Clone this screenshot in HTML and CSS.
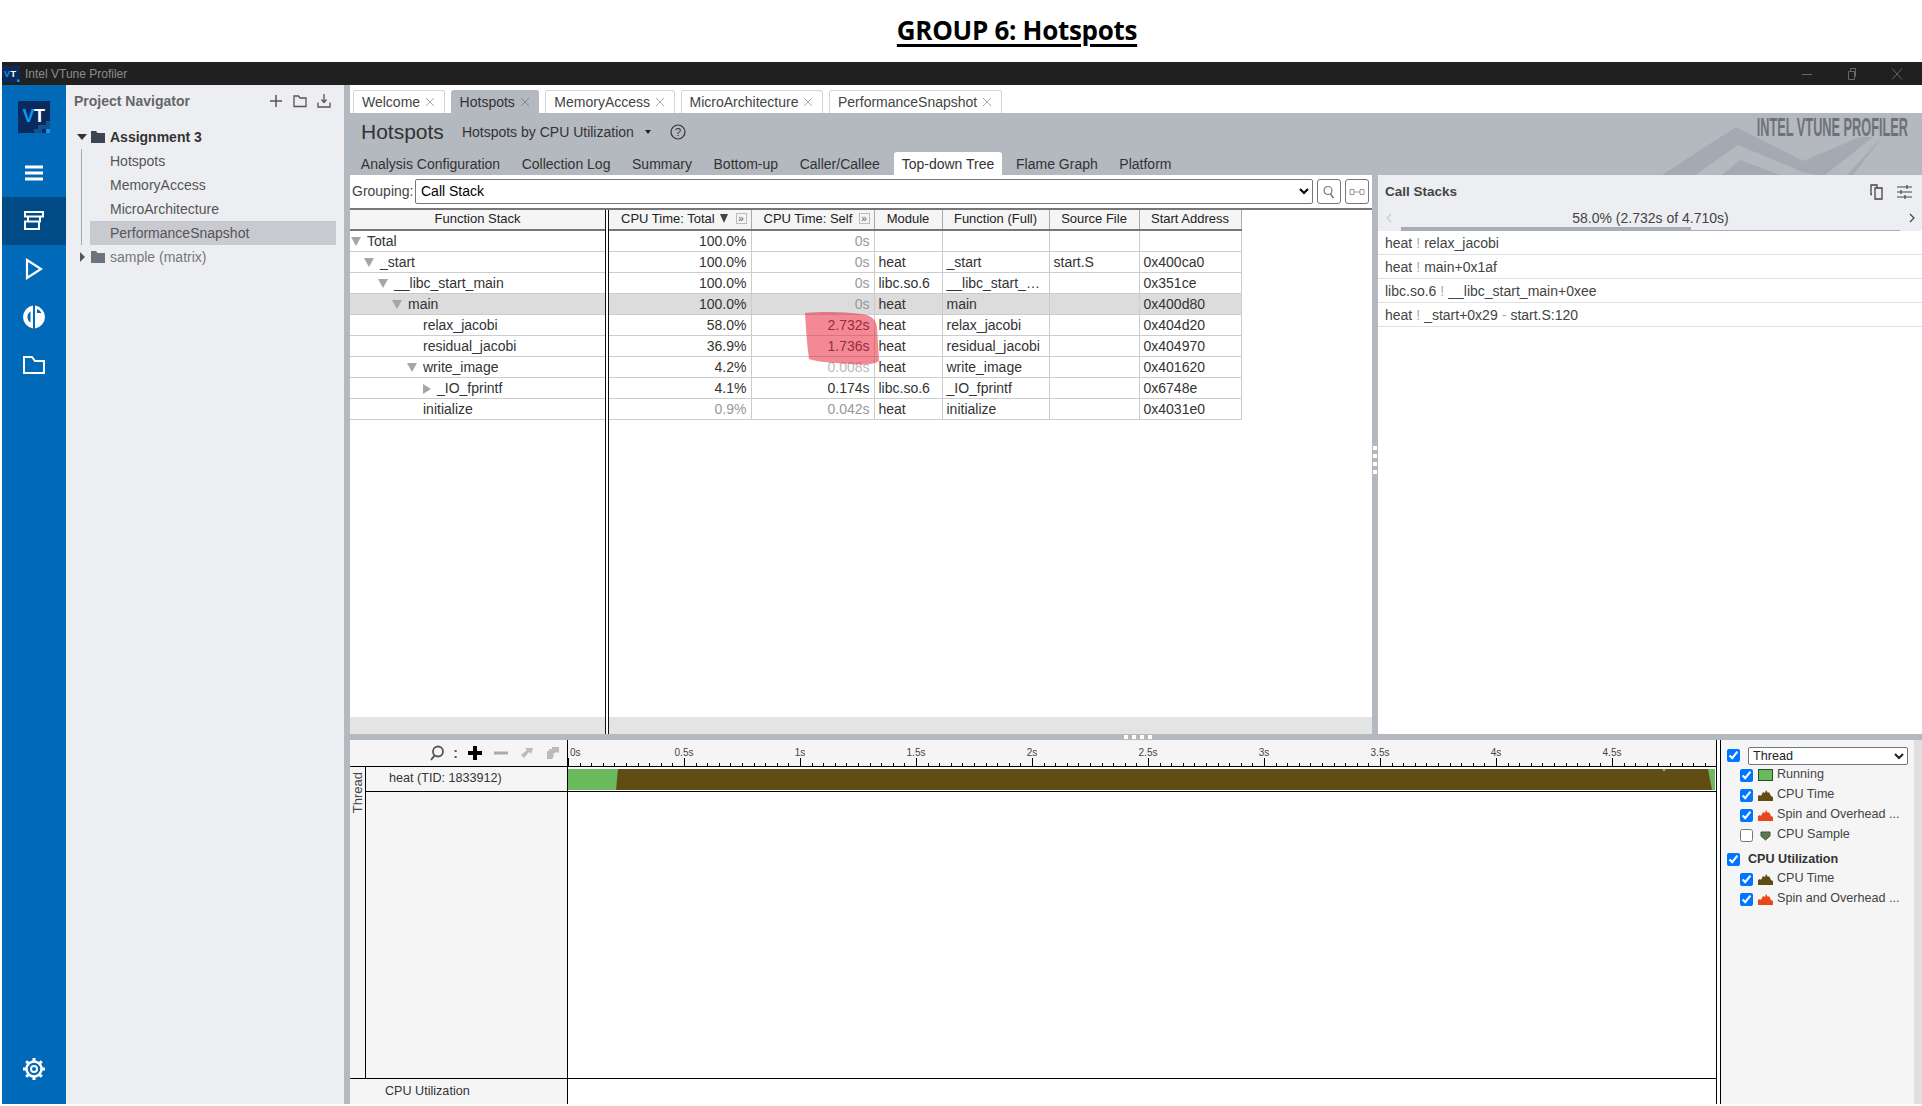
FILE: index.html
```html
<!DOCTYPE html>
<html lang="en">
<head>
    <meta charset="UTF-8">
    <meta name="viewport" content="width=device-width, initial-scale=1.0">
    <title>GROUP 6: Hotspots</title>
    <link rel="stylesheet" href="styles.css">
</head>
<body>
    <h1 class="page-title"><span>GROUP 6: Hotspots</span></h1>

    <div class="app">
        <!-- Window title bar -->
        <div class="titlebar">
            <svg class="titlebar-logo" viewBox="0 0 18 16">
                <rect width="18" height="16" fill="#0a2a5e"/>
                <text x="2" y="11" class="logo-v" font-size="9">V</text>
                <text x="8.500" y="11" class="logo-t" font-size="9">T</text>
                <rect x="15" y="13.500" width="2.500" height="2.500" fill="#0a9bf0"/>
            </svg>
            <span class="titlebar-text">Intel VTune Profiler</span>
            <div class="window-controls">
                <svg width="12" height="12" viewBox="0 0 12 12"><path d="M1 6.500h10" stroke="#666" fill="none"/></svg>
                <svg width="12" height="14" viewBox="0 0 12 14"><path d="M2.500 4.500h6v8h-6zM4.500 4.500v-3h5v8h-1" stroke="#666" fill="none"/></svg>
                <svg width="12" height="14" viewBox="0 0 12 14"><path d="M1 1.500l10 11M11 1.500l-10 11" stroke="#666" fill="none"/></svg>
            </div>
        </div>

        <div class="app-body">
            <!-- Left icon rail -->
            <div class="rail">
                <svg class="rail-logo" viewBox="0 0 32 32">
                    <rect width="32" height="32" fill="#0a2a5e"/>
                    <text x="4.500" y="21" class="logo-v" font-size="18">V</text>
                    <text x="16" y="21" class="logo-t" font-size="18">T</text>
                    <rect x="16" y="28" width="4" height="4" fill="#14528f"/>
                    <rect x="20" y="24" width="4" height="8" fill="#14528f"/>
                    <rect x="24" y="24" width="4" height="4" fill="#14528f"/>
                    <rect x="28" y="20" width="4" height="8" fill="#14528f"/>
                    <rect x="28" y="28" width="4" height="4" fill="#0a9bf0"/>
                </svg>
                <div class="rail-item">
                    <svg width="18" height="16" viewBox="0 0 18 16"><path d="M0 2h18M0 8h18M0 14h18" stroke="#fff" stroke-width="3" fill="none"/></svg>
                </div>
                <div class="rail-item active">
                    <svg width="20" height="20" viewBox="0 0 20 20"><path d="M1 1h18v4.500H1zM4 5.500v5h12v-5M1 10.500h14V18H1z" stroke="#fff" stroke-width="2" fill="none"/></svg>
                </div>
                <div class="rail-item">
                    <svg width="18" height="22" viewBox="0 0 18 22"><path d="M2 2l14 9-14 9z" stroke="#fff" stroke-width="2.200" fill="none"/></svg>
                </div>
                <div class="rail-item">
                    <svg width="24" height="24" viewBox="0 0 24 24"><path d="M11 .6v22.800A11.500 11.500 0 0 1 11 .6zM8.500 6.500A6.500 6.500 0 0 0 8.500 17.500z" fill="#fff" fill-rule="evenodd"/><path d="M13 .6A11.500 11.500 0 0 1 13 23.400zM15 4v4h4.500A8 8 0 0 0 15 4z" fill="#fff" fill-rule="evenodd"/></svg>
                </div>
                <div class="rail-item">
                    <svg width="22" height="18" viewBox="0 0 22 18"><path d="M1 1h8l3 4h9v12H1z" stroke="#fff" stroke-width="2" fill="none"/></svg>
                </div>
                <div class="rail-spacer"></div>
                <svg class="rail-gear" width="24" height="24" viewBox="0 0 24 24">
                    <circle cx="12" cy="12" r="7.500" stroke="#fff" stroke-width="2.500" fill="none"/>
                    <circle cx="12" cy="12" r="3" stroke="#fff" stroke-width="2" fill="none"/>
                    <path d="M12 1v3M12 20v3M1 12h3M20 12h3M4.200 4.200l2.100 2.100M17.700 17.700l2.100 2.100M4.200 19.800l2.100-2.100M17.700 6.300l2.100-2.100" stroke="#fff" stroke-width="3" fill="none"/>
                </svg>
            </div>

            <!-- Project navigator -->
            <div class="navigator">
                <div class="nav-header">
                    <span class="nav-title">Project Navigator</span>
                    <div class="nav-tools">
                        <svg width="14" height="14" viewBox="0 0 14 14"><path d="M7 1v12M1 7h12" stroke="#555" stroke-width="1.500" fill="none"/></svg>
                        <svg width="14" height="14" viewBox="0 0 14 14"><path d="M1 2h4.500l1.500 2h6v8.500H1z" stroke="#555" stroke-width="1.300" fill="none"/></svg>
                        <svg width="14" height="14" viewBox="0 0 14 14"><path d="M7 0v8M4.500 5.500L7 8.500l2.500-3M1 8.500v4.500h12V8.500" stroke="#555" stroke-width="1.300" fill="none"/></svg>
                    </div>
                </div>
                <div class="tree-root open">
                    <span class="caret-down"></span>
                    <svg class="tree-folder" viewBox="0 0 14 12"><path d="M0 0h5l1.500 2H14v10H0z" fill="#3c4652"/></svg>
                    <span>Assignment 3</span>
                </div>
                <div class="tree-children">
                    <div class="tree-item">Hotspots</div>
                    <div class="tree-item">MemoryAccess</div>
                    <div class="tree-item">MicroArchitecture</div>
                    <div class="tree-item selected">PerformanceSnapshot</div>
                </div>
                <div class="tree-root">
                    <span class="caret-right"></span>
                    <svg class="tree-folder" viewBox="0 0 14 12"><path d="M0 0h5l1.500 2H14v10H0z" fill="#6d747d"/></svg>
                    <span>sample (matrix)</span>
                </div>
            </div>
            <div class="splitter-v"></div>

            <!-- Main area -->
            <div class="main">
                <div class="tabs">
                    <div class="tab">Welcome<svg class="tab-close" viewBox="0 0 10 10"><path d="M1 1l8 8M9 1l-8 8"/></svg></div>
                    <div class="tab active">Hotspots<svg class="tab-close" viewBox="0 0 10 10"><path d="M1 1l8 8M9 1l-8 8"/></svg></div>
                    <div class="tab">MemoryAccess<svg class="tab-close" viewBox="0 0 10 10"><path d="M1 1l8 8M9 1l-8 8"/></svg></div>
                    <div class="tab">MicroArchitecture<svg class="tab-close" viewBox="0 0 10 10"><path d="M1 1l8 8M9 1l-8 8"/></svg></div>
                    <div class="tab">PerformanceSnapshot<svg class="tab-close" viewBox="0 0 10 10"><path d="M1 1l8 8M9 1l-8 8"/></svg></div>
                </div>

                <div class="result-header">
                    <svg class="brand-art" width="282" height="65" viewBox="0 0 282 65">
                        <polygon points="22,65 96,17 163,51 220,27 233,27 185,65 178,65 165,63 98,35 55,65" fill="#a5a9b1"/>
                        <polygon points="82,65 100,50 140,65" fill="#a5a9b1"/>
                        <polygon points="207,65 242,27 213,65" fill="#a5a9b1"/>
                    </svg>
                    <div class="brand-text">INTEL VTUNE PROFILER</div>
                    <div class="result-title">
                        <span class="result-name">Hotspots</span>
                        <span class="result-type">Hotspots by CPU Utilization</span>
                        <span class="result-caret"></span>
                        <svg class="help-icon" width="16" height="16" viewBox="0 0 16 16">
                            <circle cx="8" cy="8" r="7" stroke="#333" stroke-width="1.200" fill="none"/>
                            <text x="8" y="12" text-anchor="middle" class="help-mark">?</text>
                        </svg>
                    </div>
                    <div class="subtabs">
                        <div class="subtab">Analysis Configuration</div>
                        <div class="subtab">Collection Log</div>
                        <div class="subtab">Summary</div>
                        <div class="subtab">Bottom-up</div>
                        <div class="subtab">Caller/Callee</div>
                        <div class="subtab active">Top-down Tree</div>
                        <div class="subtab">Flame Graph</div>
                        <div class="subtab">Platform</div>
                    </div>
                </div>

                <div class="content">
                    <div class="top-split">
                        <!-- Grid pane -->
                        <div class="grid-pane">
                            <div class="grouping">
                                <label class="grouping-label">Grouping:</label>
                                <select class="grouping-select"><option>Call Stack</option></select>
                                <div class="tool-btn">
                                    <svg width="14" height="14" viewBox="0 0 14 14"><circle cx="6" cy="5.500" r="4" stroke="#777" fill="none" stroke-width="1.200"/><path d="M8.500 9l3 4" stroke="#777" stroke-width="1.500"/></svg>
                                </div>
                                <div class="tool-btn">
                                    <svg width="16" height="10" viewBox="0 0 16 10"><path d="M1 2.500h4v5H1zM11 2.500h4v5h-4zM5 5h6" stroke="#999" fill="none"/></svg>
                                </div>
                            </div>
                            <div class="grid-body">
                                <div class="grid-tree">
                                    <table class="grid">
                                        <thead><tr><th>Function Stack</th></tr></thead>
                                        <tbody>
                                            <tr><td class="lvl-0"><span class="tw tw-open"></span>Total</td></tr>
                                            <tr><td class="lvl-1"><span class="tw tw-open"></span>_start</td></tr>
                                            <tr><td class="lvl-2"><span class="tw tw-open"></span>__libc_start_main</td></tr>
                                            <tr class="row-selected"><td class="lvl-3"><span class="tw tw-open"></span>main</td></tr>
                                            <tr><td class="lvl-4"><span class="tw"></span>relax_jacobi</td></tr>
                                            <tr><td class="lvl-4"><span class="tw"></span>residual_jacobi</td></tr>
                                            <tr><td class="lvl-4"><span class="tw tw-open"></span>write_image</td></tr>
                                            <tr><td class="lvl-5"><span class="tw tw-closed"></span>_IO_fprintf</td></tr>
                                            <tr><td class="lvl-4"><span class="tw"></span>initialize</td></tr>
                                        </tbody>
                                    </table>
                                    <div class="grid-hscroll"></div>
                                </div>
                                <div class="grid-divider"></div>
                                <div class="grid-data">
                                    <table class="grid">
                                        <colgroup>
                                            <col class="col-total"><col class="col-self"><col class="col-module">
                                            <col class="col-func"><col class="col-source"><col class="col-addr">
                                        </colgroup>
                                        <thead>
                                            <tr>
                                                <th><div class="th-metric">CPU Time: Total<span class="sort-mark"></span><span class="expand-box">»</span></div></th>
                                                <th><div class="th-metric">CPU Time: Self<span class="expand-box">»</span></div></th>
                                                <th>Module</th>
                                                <th>Function (Full)</th>
                                                <th>Source File</th>
                                                <th>Start Address</th>
                                            </tr>
                                        </thead>
                                        <tbody>
                                            <tr><td class="num">100.0%</td><td class="num faint">0s</td><td></td><td></td><td></td><td></td></tr>
                                            <tr><td class="num">100.0%</td><td class="num faint">0s</td><td>heat</td><td>_start</td><td>start.S</td><td>0x400ca0</td></tr>
                                            <tr><td class="num">100.0%</td><td class="num faint">0s</td><td>libc.so.6</td><td class="clip">__libc_start_main</td><td></td><td>0x351ce</td></tr>
                                            <tr class="row-selected"><td class="num">100.0%</td><td class="num faint">0s</td><td>heat</td><td>main</td><td></td><td>0x400d80</td></tr>
                                            <tr><td class="num">58.0%</td><td class="num">2.732s</td><td>heat</td><td>relax_jacobi</td><td></td><td>0x404d20</td></tr>
                                            <tr><td class="num">36.9%</td><td class="num">1.736s</td><td>heat</td><td>residual_jacobi</td><td></td><td>0x404970</td></tr>
                                            <tr><td class="num">4.2%</td><td class="num fainter">0.008s</td><td>heat</td><td>write_image</td><td></td><td>0x401620</td></tr>
                                            <tr><td class="num">4.1%</td><td class="num">0.174s</td><td>libc.so.6</td><td>_IO_fprintf</td><td></td><td>0x6748e</td></tr>
                                            <tr><td class="num faint">0.9%</td><td class="num faint">0.042s</td><td>heat</td><td>initialize</td><td></td><td>0x4031e0</td></tr>
                                        </tbody>
                                    </table>
                                    <div class="grid-hscroll"></div>
                                    <!-- hand-drawn red marker over the self time cells -->
                                    <svg class="marker" width="82" height="56" viewBox="0 0 80 56">
                                        <path d="M2 2C20 0 45 1 58 3C68 4 73 8 74 16L76 50C70 54 60 54 48 53C30 52 15 51 6 48C4 34 3 18 2 2z"/>
                                    </svg>
                                </div>
                            </div>
                        </div>
                        <div class="splitter-dots-v"><i></i><i></i><i></i><i></i></div>

                        <!-- Call stacks pane -->
                        <div class="stacks">
                            <div class="stacks-head">
                                <span class="stacks-title">Call Stacks</span>
                                <div class="stacks-tools">
                                    <svg width="14" height="16" viewBox="0 0 14 16"><path d="M2 10.500H1V1h6v2.500M5 4h7v11H5z" stroke="#444" stroke-width="1.300" fill="none"/></svg>
                                    <svg width="16" height="16" viewBox="0 0 16 16"><path d="M1 3h15M1 8h15M1 13h15M11 1v4M5 6v4M9 11v4" stroke="#444" stroke-width="1.200" fill="none"/></svg>
                                </div>
                            </div>
                            <div class="stacks-nav">
                                <svg width="8" height="12" viewBox="0 0 8 12"><path d="M6 2L2 6l4 4" stroke="#ccc" stroke-width="1.200" fill="none"/></svg>
                                <span class="stacks-count">58.0% (2.732s of 4.710s)</span>
                                <svg width="8" height="12" viewBox="0 0 8 12"><path d="M2 2l4 4-4 4" stroke="#444" stroke-width="1.200" fill="none"/></svg>
                            </div>
                            <div class="stacks-progress"><div class="stacks-progress-fill"></div></div>
                            <div class="stack-row">heat <em>!</em> relax_jacobi</div>
                            <div class="stack-row">heat <em>!</em> main+0x1af</div>
                            <div class="stack-row">libc.so.6 <em>!</em> __libc_start_main+0xee</div>
                            <div class="stack-row">heat <em>!</em> _start+0x29 <em>-</em> start.S:120</div>
                        </div>
                    </div>

                    <div class="splitter-dots-h"><i></i><i></i><i></i><i></i></div>

                    <!-- Timeline -->
                    <div class="timeline">
                        <div class="tl-left">
                            <div class="tl-tools">
                                <svg width="16" height="16" viewBox="0 0 16 16"><circle cx="9" cy="6.500" r="5" stroke="#555" stroke-width="1.800" fill="none"/><path d="M5.500 10.500L2 15" stroke="#555" stroke-width="2"/></svg>
                                <span class="tl-colon">:</span>
                                <svg width="14" height="14" viewBox="0 0 14 14"><path d="M7 0v14M0 7h14" stroke="#000" stroke-width="4"/></svg>
                                <svg width="14" height="14" viewBox="0 0 14 14"><path d="M0 7h14" stroke="#aaa" stroke-width="3"/></svg>
                                <svg width="14" height="14" viewBox="0 0 14 14"><path d="M13 2H5l2 2-6 5 3 3 5-6 2 2z" fill="#bbb"/></svg>
                                <svg width="14" height="14" viewBox="0 0 14 14"><path d="M13 1H6v2H3v2H1v8h5l2-3-1-2 4-2 2 1z" fill="#bbb"/></svg>
                            </div>
                            <div class="tl-threads">
                                <div class="tl-group-label"><span>Thread</span></div>
                                <div class="tl-thread-list">
                                    <div class="tl-thread">heat (TID: 1833912)</div>
                                </div>
                            </div>
                            <div class="tl-bottom-label">CPU Utilization</div>
                        </div>
                        <div class="tl-chart">
                            <div class="ruler">
                                <div class="ruler-cell first"><span>0s</span></div>
                                <div class="ruler-cell"><span>0.5s</span></div>
                                <div class="ruler-cell"><span>1s</span></div>
                                <div class="ruler-cell"><span>1.5s</span></div>
                                <div class="ruler-cell"><span>2s</span></div>
                                <div class="ruler-cell"><span>2.5s</span></div>
                                <div class="ruler-cell"><span>3s</span></div>
                                <div class="ruler-cell"><span>3.5s</span></div>
                                <div class="ruler-cell"><span>4s</span></div>
                                <div class="ruler-cell"><span>4.5s</span></div>
                                <div class="ruler-cell"></div>
                            </div>
                            <div class="tl-track">
                                <svg class="tl-bar" width="1147" height="21" viewBox="0 0 1147 21">
                                    <rect width="1147" height="21" fill="#5f4d14"/>
                                    <polygon points="0,0 50,0 48,21 0,21" fill="#6aba5d"/>
                                    <polygon points="1094,0 1098,0 1096,3" fill="#6aba5d"/>
                                    <polygon points="1140,0 1147,0 1147,21 1144,21" fill="#6aba5d"/>
                                </svg>
                            </div>
                            <div class="tl-chart-space"></div>
                            <div class="tl-chart-bottom"></div>
                        </div>
                        <div class="tl-gap"></div>
                        <div class="legend">
                            <div class="legend-group first">
                                <input type="checkbox" checked>
                                <select class="legend-select"><option>Thread</option></select>
                            </div>
                            <div class="legend-row">
                                <input type="checkbox" checked>
                                <span class="swatch-running"></span>
                                <span class="legend-text">Running</span>
                            </div>
                            <div class="legend-row">
                                <input type="checkbox" checked>
                                <svg class="legend-icon" viewBox="0 0 15 11"><path class="mtn-brown" d="M0 11V6l2-1 1 1 2-4 2 1 1-3 2 3 1-1 2 4 2 1v4z"/></svg>
                                <span class="legend-text">CPU Time</span>
                            </div>
                            <div class="legend-row">
                                <input type="checkbox" checked>
                                <svg class="legend-icon" viewBox="0 0 15 11"><path class="mtn-orange" d="M0 11V6l2-1 1 1 2-4 2 1 1-3 2 3 1-1 2 4 2 1v4z"/></svg>
                                <span class="legend-text">Spin and Overhead ...</span>
                            </div>
                            <div class="legend-row">
                                <input type="checkbox">
                                <svg class="legend-icon" viewBox="0 0 15 11"><path d="M3 2h9v4l-4.500 4-4.500-4z" fill="#5c7a50" stroke="#3e5236"/></svg>
                                <span class="legend-text">CPU Sample</span>
                            </div>
                            <div class="legend-group second">
                                <input type="checkbox" checked>
                                <span class="legend-group-name">CPU Utilization</span>
                            </div>
                            <div class="legend-row">
                                <input type="checkbox" checked>
                                <svg class="legend-icon" viewBox="0 0 15 11"><path class="mtn-brown" d="M0 11V6l2-1 1 1 2-4 2 1 1-3 2 3 1-1 2 4 2 1v4z"/></svg>
                                <span class="legend-text">CPU Time</span>
                            </div>
                            <div class="legend-row">
                                <input type="checkbox" checked>
                                <svg class="legend-icon" viewBox="0 0 15 11"><path class="mtn-orange" d="M0 11V6l2-1 1 1 2-4 2 1 1-3 2 3 1-1 2 4 2 1v4z"/></svg>
                                <span class="legend-text">Spin and Overhead ...</span>
                            </div>
                        </div>
                        <div class="legend-scroll"></div>
                    </div>
                </div>
            </div>
        </div>
    </div>
</body>
</html>
```

FILE: styles.css
```css
* {
    box-sizing: border-box;
}
html, body {
    margin: 0;
    height: 100%;
    overflow: hidden;
}
body {
    font-family: "Liberation Sans", Arial, sans-serif;
    font-size: 14px;
    color: #333;
    background-color: #fff;
}

/* Page heading above the screenshot */
.page-title {
    height: 62px;
    margin: 0;
    padding: 12px 0 0 112px;
    font-family: "Open Sans", sans-serif;
    font-size: 26px;
    line-height: 36px;
    font-weight: 700;
    color: #000;
    text-align: center;
    letter-spacing: -0.3px;
}
.page-title span {
    text-decoration: underline;
    text-decoration-thickness: 3px;
    text-underline-offset: 4px;
}

.app {
    display: flex;
    flex-direction: column;
    height: 1042px;
    margin-left: 2px;
}

/* Title bar */
.titlebar {
    display: flex;
    align-items: center;
    flex: 0 0 23px;
    background-color: #202020;
}
.titlebar-logo {
    width: 18px;
    height: 16px;
}
.titlebar-text {
    margin-left: 5px;
    font-size: 12px;
    color: #8c8c8c;
}
.window-controls {
    display: flex;
    align-items: center;
    gap: 33px;
    margin-left: auto;
    padding-right: 19px;
}
.logo-v, .logo-t {
    font-family: "Liberation Sans", sans-serif;
    font-weight: 700;
}
.logo-v {
    fill: #0a9bf0;
}
.logo-t {
    fill: #fff;
}

.app-body {
    display: flex;
    flex: 1;
    min-height: 0;
}

/* Icon rail */
.rail {
    display: flex;
    flex-direction: column;
    align-items: center;
    flex: 0 0 64px;
    background-color: #0069b8;
    padding-top: 16px;
}
.rail-logo {
    width: 32px;
    height: 32px;
    margin-bottom: 16px;
    flex: none;
}
.rail-item {
    display: flex;
    align-items: center;
    justify-content: center;
    width: 100%;
    height: 48px;
    flex: none;
}
.rail-item.active {
    background-color: #004a86;
}
.rail-spacer {
    flex: 1;
}
.rail-gear {
    margin-bottom: 23px;
}

/* Project navigator */
.navigator {
    flex: 0 0 278px;
    background-color: #edeef1;
}
.nav-header {
    display: flex;
    align-items: center;
    justify-content: space-between;
    height: 32px;
    padding: 0 13px 0 8px;
    margin-bottom: 8px;
}
.nav-title {
    font-weight: 700;
    color: #666;
}
.nav-tools {
    display: flex;
    gap: 10px;
}
.tree-root {
    display: flex;
    align-items: center;
    height: 24px;
    padding-left: 11px;
    color: #777;
}
.tree-root.open {
    font-weight: 700;
    color: #333;
}
.tree-folder {
    width: 14px;
    height: 12px;
    margin: 0 5px 0 4px;
}
.caret-down, .caret-right {
    display: inline-block;
    width: 10px;
    height: 6px;
}
.caret-down {
    border-left: 5px solid transparent;
    border-right: 5px solid transparent;
    border-top: 6px solid #333;
}
.caret-right {
    width: 5px;
    height: 10px;
    margin: 0 2px 0 3px;
    border-top: 5px solid transparent;
    border-bottom: 5px solid transparent;
    border-left: 5px solid #555;
}
.tree-children {
    margin-left: 15px;
    border-left: 1px solid #aaa;
}
.tree-item {
    display: flex;
    align-items: center;
    height: 24px;
    margin: 0 8px 0 8px;
    padding-left: 20px;
    color: #555;
}
.tree-item.selected {
    background-color: #c8cad0;
}

.splitter-v {
    flex: 0 0 6px;
    background-color: #b4b8bf;
}

/* Main area */
.main {
    display: flex;
    flex-direction: column;
    flex: 1;
    min-width: 0;
}
.tabs {
    display: flex;
    flex: 0 0 28px;
    gap: 6px;
    padding: 5px 0 0 3px;
    background-color: #fff;
}
.tab {
    display: flex;
    align-items: center;
    padding: 0 8.5px 0 8px;
    border: 1px solid #d2d5d9;
    border-bottom: none;
    border-radius: 3px 3px 0 0;
    color: #444;
}
.tab.active {
    background-color: #b4b8bf;
    border-color: #b4b8bf;
    color: #333;
}
.tab-close {
    width: 10px;
    height: 10px;
    margin-left: 5px;
    stroke: #aaa;
    fill: none;
}
.tab.active .tab-close {
    stroke: #888;
}

.result-header {
    position: relative;
    flex: 0 0 62px;
    background-color: #b4b8bf;
    overflow: hidden;
}
.brand-art {
    position: absolute;
    right: 0;
    top: -3px;
}
.brand-text {
    position: absolute;
    top: -1px;
    right: 14px;
    width: 400px;
    font-size: 26px;
    line-height: 30px;
    font-weight: 700;
    color: #6e7278;
    white-space: nowrap;
    text-align: right;
    transform: scaleX(0.49);
    transform-origin: right center;
}
.result-title {
    position: relative;
    display: flex;
    align-items: center;
    height: 37px;
    padding-left: 11px;
}
.result-name {
    font-size: 21px;
    color: #333;
}
.result-type {
    margin-left: 18px;
}
.result-caret {
    width: 0;
    height: 0;
    margin-left: 11px;
    border-left: 3.5px solid transparent;
    border-right: 3.5px solid transparent;
    border-top: 4px solid #222;
}
.help-icon {
    margin-left: 19px;
}
.help-mark {
    font-size: 11px;
    fill: #333;
}
.subtabs {
    position: relative;
    display: flex;
    height: 25px;
}
.subtab {
    display: flex;
    align-items: center;
    padding: 2px 10.8px 0;
    color: #333;
}
.subtab.active {
    margin: 2px 3px 0;
    padding: 0 8px;
    background-color: #fff;
    border-radius: 3px 3px 0 0;
}

.content {
    display: flex;
    flex-direction: column;
    flex: 1;
    min-height: 0;
}
.top-split {
    display: flex;
    flex: 0 0 559px;
    min-height: 0;
}

/* Grid */
.grid-pane {
    display: flex;
    flex-direction: column;
    flex: 0 0 1022px;
    background-color: #fff;
}
.grouping {
    display: flex;
    align-items: center;
    flex: 0 0 33px;
    padding: 0 2px;
    color: #444;
}
.grouping-label {
    width: 63px;
    margin-bottom: 1px;
}
.grouping-select {
    width: 898px;
    height: 25px;
    padding: 0 0 1px 1px;
    border: 1px solid #777;
    border-radius: 2px;
    background-color: #fff;
    font-family: inherit;
    font-size: 14px;
    color: #000;
}
.tool-btn {
    display: flex;
    align-items: center;
    justify-content: center;
    width: 24px;
    height: 25px;
    margin-left: 4px;
    border: 1px solid #777;
    border-radius: 3px;
}
.grid-body {
    display: flex;
    flex: 1;
    min-height: 0;
    border-top: 2px solid #777;
}
.grid-tree {
    display: flex;
    flex-direction: column;
    flex: 0 0 255px;
}
.grid-divider {
    flex: 0 0 4px;
    border-left: 1px solid #111;
    border-right: 1px solid #111;
}
.grid-data {
    position: relative;
    display: flex;
    flex-direction: column;
    flex: 1;
}
.grid {
    flex: none;
    width: 100%;
    border-collapse: collapse;
    table-layout: fixed;
}
.grid-data .grid {
    width: 632px;
}
.col-total { width: 142px; }
.col-self { width: 123px; }
.col-module { width: 68px; }
.col-func { width: 107px; }
.col-source { width: 90px; }
.col-addr { width: 102px; }
.grid th {
    height: 20px;
    padding: 0 4px 2px;
    background-color: #f5f5f5;
    border-right: 1px solid #aaa;
    border-bottom: 2px solid #777;
    font-size: 13px;
    font-weight: 400;
    color: #222;
}
.grid-tree .grid th {
    border-right: none;
}
.grid td {
    height: 21px;
    padding: 0 4px;
    border-right: 1px solid #ccc;
    border-bottom: 1px solid #ccc;
    color: #333;
    white-space: nowrap;
    overflow: hidden;
}
.grid-tree .grid td {
    border-right: none;
    padding-right: 0;
}
.row-selected td {
    background-color: #dcdcdc;
}
.grid td.num {
    text-align: right;
}
.grid td.faint {
    color: #999;
}
.grid td.fainter {
    color: #bbb;
}
.grid td.clip {
    text-overflow: ellipsis;
}
.lvl-0 { padding-left: 1px !important; }
.lvl-1 { padding-left: 14px !important; }
.lvl-2 { padding-left: 28px !important; }
.lvl-3 { padding-left: 42px !important; }
.lvl-4 { padding-left: 57px !important; }
.lvl-5 { padding-left: 71px !important; }
.tw {
    display: inline-block;
    width: 16px;
    height: 10px;
    vertical-align: -1px;
}
.tw-open::before {
    content: "";
    display: block;
    width: 0;
    height: 0;
    border-left: 5px solid transparent;
    border-right: 5px solid transparent;
    border-top: 9px solid #a6a6a6;
}
.tw-closed::before {
    content: "";
    display: block;
    width: 0;
    height: 0;
    margin-left: 2px;
    border-top: 5px solid transparent;
    border-bottom: 5px solid transparent;
    border-left: 8px solid #a6a6a6;
}
.th-metric {
    display: flex;
    align-items: center;
    padding-left: 8px;
}
.th-metric .expand-box {
    margin-left: auto;
}
.sort-mark {
    width: 0;
    height: 0;
    margin-left: 5px;
    border-left: 4px solid transparent;
    border-right: 4px solid transparent;
    border-top: 9px solid #444;
}
.expand-box {
    display: inline-flex;
    align-items: center;
    justify-content: center;
    width: 11px;
    height: 11px;
    border: 1px solid #bbb;
    font-size: 10px;
    line-height: 9px;
    color: #555;
}
.marker {
    position: absolute;
    left: 193px;
    top: 101px;
    pointer-events: none;
}
.marker path {
    fill: #e8283c;
    fill-opacity: 0.55;
}
.grid-hscroll {
    flex: 0 0 17px;
    margin-top: auto;
    background-color: #e4e4e4;
}

.splitter-dots-v {
    display: flex;
    flex-direction: column;
    align-items: center;
    justify-content: center;
    gap: 4px;
    flex: 0 0 6px;
    padding-top: 10px;
    background-color: #b4b8bf;
}
.splitter-dots-v i, .splitter-dots-h i {
    display: block;
    width: 4px;
    height: 4px;
    background-color: #fff;
}
.splitter-dots-h {
    display: flex;
    align-items: center;
    justify-content: center;
    gap: 4px;
    flex: 0 0 6px;
    padding-left: 4px;
    background-color: #b4b8bf;
}

/* Call stacks */
.stacks {
    flex: 1;
    min-width: 0;
    background-color: #fff;
    color: #444;
}
.stacks-head {
    display: flex;
    align-items: center;
    justify-content: space-between;
    height: 33px;
    padding: 0 10px 0 7px;
    background-color: #edeef1;
}
.stacks-title {
    font-size: 13.5px;
    font-weight: 700;
    color: #444;
}
.stacks-tools {
    display: flex;
    gap: 12px;
}
.stacks-nav {
    display: flex;
    align-items: center;
    justify-content: space-between;
    height: 19px;
    padding: 1px 6px 0 7px;
    background-color: #edeef1;
}
.stacks-progress {
    height: 4px;
    padding: 0 22px 0 23px;
    background-color: #edeef1;
    background-image: linear-gradient(#a9adb4, #a9adb4);
    background-size: calc(100% - 45px) 1px;
    background-position: 23px bottom;
    background-repeat: no-repeat;
}
.stacks-progress-fill {
    width: 290px;
    height: 4px;
    background-color: #a9adb4;
}
.stack-row {
    display: flex;
    align-items: center;
    gap: 4px;
    height: 24px;
    padding-left: 7px;
    border-bottom: 1px solid #dfe1e5;
}
.stack-row em {
    font-style: normal;
    color: #aaa;
}

/* Timeline */
.timeline {
    display: flex;
    flex: 1;
    min-height: 0;
}
.tl-left {
    display: flex;
    flex-direction: column;
    flex: 0 0 218px;
    background-color: #f5f5f5;
    border-right: 1px solid #000;
}
.tl-tools {
    display: flex;
    align-items: center;
    justify-content: flex-end;
    gap: 12px;
    flex: 0 0 27px;
    padding-right: 7px;
    border-bottom: 1px solid #000;
}
.tl-colon {
    font-size: 14px;
    font-weight: 700;
    color: #555;
    margin-left: -4px;
    margin-right: -2px;
}
.tl-threads {
    display: flex;
    flex: 1;
    min-height: 0;
    border-bottom: 1px solid #000;
}
.tl-group-label {
    flex: 0 0 16px;
    padding-top: 5px;
    border-right: 1px solid #000;
    font-size: 13px;
    line-height: 15px;
}
.tl-group-label span {
    display: block;
    writing-mode: vertical-rl;
    transform: rotate(180deg);
    color: #444;
}
.tl-thread-list {
    flex: 1;
}
.tl-thread {
    display: flex;
    align-items: center;
    height: 25px;
    padding: 0 0 2px 23px;
    border-bottom: 1px solid #000;
    font-size: 12.6px;
}
.tl-bottom-label {
    display: flex;
    align-items: center;
    flex: 0 0 25px;
    padding: 0 0 2px 35px;
    font-size: 12.6px;
}
.tl-chart {
    display: flex;
    flex-direction: column;
    flex: 0 0 1148px;
    min-width: 0;
    background-color: #fff;
}
.ruler {
    position: relative;
    display: flex;
    flex: 0 0 27px;
    overflow: hidden;
    background-color: #f5f5f5;
    border-bottom: 1px solid #000;
}
.ruler::after {
    content: "";
    position: absolute;
    left: 0;
    right: 0;
    bottom: 0;
    height: 3px;
    background-image: repeating-linear-gradient(90deg, #000 0 1px, transparent 1px 11.6px);
}
.ruler-cell {
    position: relative;
    flex: 0 0 116px;
    font-size: 10px;
    color: #444;
}
.ruler-cell::before {
    content: "";
    position: absolute;
    left: 0;
    bottom: 0;
    width: 1px;
    height: 8px;
    background-color: #000;
}
.ruler-cell span {
    position: absolute;
    top: 7px;
    left: 0;
    transform: translateX(-50%);
    white-space: nowrap;
}
.ruler-cell.first span {
    left: 2px;
    transform: none;
}
.tl-track {
    flex: 0 0 25px;
    padding-top: 2px;
    border-bottom: 1px solid #000;
}
.tl-bar {
    display: block;
}
.tl-chart-space {
    flex: 1;
    border-bottom: 1px solid #000;
}
.tl-chart-bottom {
    flex: 0 0 25px;
}
.tl-gap {
    flex: 0 0 5px;
    background-color: #fff;
    border-left: 1px solid #000;
    border-right: 1px solid #000;
}

/* Legend */
.legend {
    flex: 0 0 193px;
    padding-top: 6px;
    background-color: #f5f5f5;
    font-size: 12.6px;
}
.legend input {
    width: 13px;
    height: 13px;
    margin: 0;
    flex: none;
}
.legend-group, .legend-row {
    display: flex;
    align-items: center;
    height: 20px;
}
.legend-group {
    gap: 8px;
    padding-left: 6px;
}
.legend-group.first {
    height: 19px;
}
.legend-group.second {
    margin-top: 4px;
}
.legend-group-name {
    font-weight: 700;
    color: #333;
}
.legend-select {
    width: 160px;
    height: 18px;
    border: 1px solid #777;
    border-radius: 2px;
    background-color: #fff;
    font-family: inherit;
    font-size: 12.6px;
    color: #222;
}
.legend-row {
    padding-left: 19px;
}
.legend-icon {
    width: 15px;
    height: 11px;
    margin-left: 5px;
    flex: none;
}
.swatch-running {
    width: 15px;
    height: 12px;
    margin-left: 5px;
    flex: none;
    background-color: #6aba5d;
    border: 1px solid #2a4a2a;
}
.legend-text {
    margin: 0 0 2px 4px;
    color: #444;
    white-space: nowrap;
}
.mtn-brown {
    fill: #5f4d14;
}
.mtn-orange {
    fill: #e8471a;
}
.legend-scroll {
    flex: 1;
    background-color: #e0e0e0;
}
```
